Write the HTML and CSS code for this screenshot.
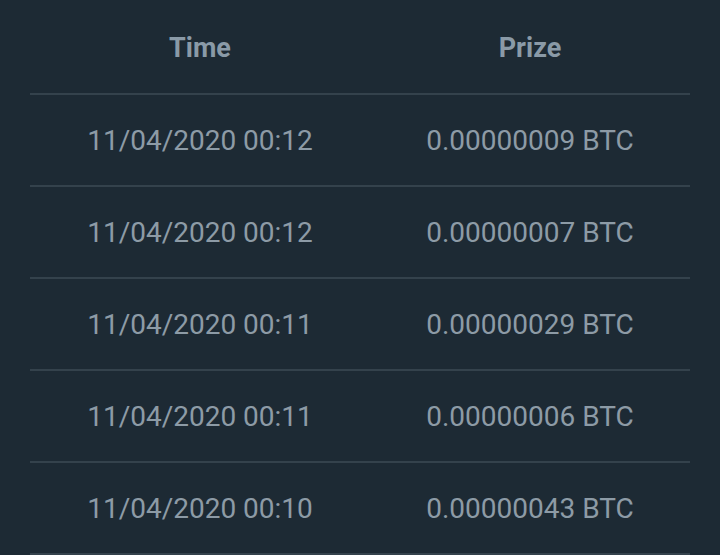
FILE: index.html
```html
<!DOCTYPE html>
<html>
<head>
  <meta charset="UTF-8">
  <title>Prize history</title>
  <link rel="stylesheet" href="styles.css">
</head>
<body>
  <div class="history">
    <table class="prizes">
      <thead>
        <tr>
          <th>Time</th>
          <th>Prize</th>
        </tr>
      </thead>
      <tbody>
        <tr><td>11/04/2020 00:12</td><td>0.00000009 BTC</td></tr>
        <tr><td>11/04/2020 00:12</td><td>0.00000007 BTC</td></tr>
        <tr><td>11/04/2020 00:11</td><td>0.00000029 BTC</td></tr>
        <tr><td>11/04/2020 00:11</td><td>0.00000006 BTC</td></tr>
        <tr><td>11/04/2020 00:10</td><td>0.00000043 BTC</td></tr>
      </tbody>
    </table>
  </div>
</body>
</html>
```

FILE: styles.css
```css
body {
  margin: 0;
  background-color: #1d2a34;
  font-family: Roboto, Arial, sans-serif;
  color: #8d9ba6;
}
.history {
  padding: 0 30px;
}
.prizes {
  width: 100%;
  border-collapse: collapse;
  table-layout: fixed;
}
.prizes th,
.prizes td {
  padding: 0 0 0 10px;
  text-align: center;
  border-bottom: 2px solid #34424c;
}
.prizes th {
  height: 91px;
  padding-top: 2px;
  font-size: 27px;
  font-weight: bold;
  color: #8a9aa7;
}
.prizes td {
  height: 90px;
  font-size: 28px;
}
```
